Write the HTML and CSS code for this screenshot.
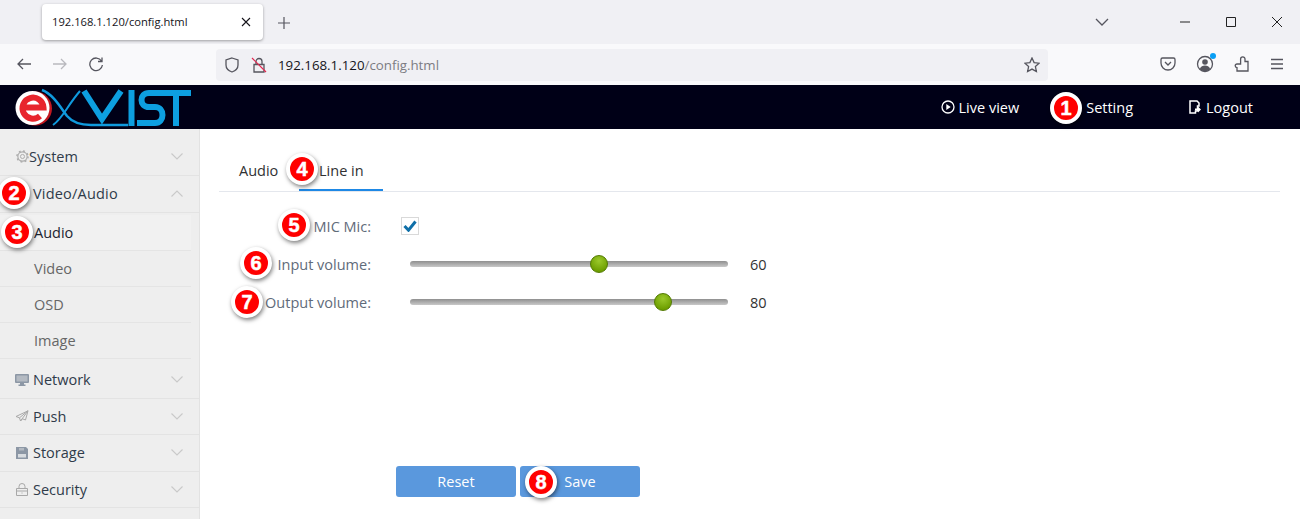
FILE: index.html
```html
<!DOCTYPE html>
<html lang="en">
<head>
<meta charset="utf-8">
<title>192.168.1.120/config.html</title>
<link rel="stylesheet" href="styles.css">
</head>
<body>
<div class="tabstrip">
  <div class="tab">
    <span class="tab-title">192.168.1.120/config.html</span>
    <svg class="ico tab-close" width="10" height="10" viewBox="0 0 10 10"><path d="M1 1l8 8M9 1L1 9"/></svg>
  </div>
  <svg class="ico newtab" width="12" height="12" viewBox="0 0 12 12"><path d="M6 0v12M0 6h12"/></svg>
  <div class="strip-spacer"></div>
  <svg class="ico tablist" width="14" height="8" viewBox="0 0 14 8"><path d="M1 1l6 6 6-6"/></svg>
  <div class="winctl">
    <svg class="ico" width="10" height="10" viewBox="0 0 10 10"><path d="M0 5h10"/></svg>
    <svg class="ico" width="10" height="10" viewBox="0 0 10 10"><path d="M.5.5h9v9h-9z"/></svg>
    <svg class="ico" width="10" height="10" viewBox="0 0 10 10"><path d="M0 0l10 10M10 0L0 10"/></svg>
  </div>
</div>
<div class="toolbar">
  <div class="nav-btns">
    <svg class="ico nav" width="16" height="16" viewBox="0 0 16 16"><path d="M15 8H2M7 3L2 8l5 5"/></svg>
    <svg class="ico nav off" width="16" height="16" viewBox="0 0 16 16"><path d="M1 8h13M9 3l5 5-5 5"/></svg>
    <svg class="ico nav" width="16" height="16" viewBox="0 0 16 16"><path d="M13.500 5A6.300 6.300 0 1 0 14.400 9M14 1.500V5.500H10"/></svg>
  </div>
  <div class="urlbar">
    <svg class="ico" width="16" height="16" viewBox="0 0 16 16"><path d="M8 1l6 2v5c0 3.500-3 6-6 7-3-1-6-3.500-6-7V3z"/></svg>
    <svg class="lock" width="16" height="16" viewBox="0 0 16 16"><path class="lock-body" d="M5 7V4.500a3 3 0 0 1 6 0V7M3 7.500h10V15H3z"/><path class="lock-slash" d="M1 1l14 14"/></svg>
    <span class="url"><span class="url-host">192.168.1.120</span>/config.html</span>
    <svg class="ico star" width="16" height="16" viewBox="0 0 16 16"><path d="M8 1l2.100 4.600 5 .6-3.700 3.400 1 5L8 12.100 3.600 14.600l1-5L.9 6.200l5-.6z"/></svg>
  </div>
  <div class="tools">
    <svg class="ico" width="16" height="16" viewBox="0 0 16 16"><path d="M2.500 2h11A1.500 1.500 0 0 1 15 3.500V7a7 7 0 0 1-14 0V3.500A1.500 1.500 0 0 1 2.500 2zM5 6l3 3 3-3"/></svg>
    <span class="profile">
      <svg class="ico" width="18" height="18" viewBox="0 0 18 18"><circle cx="9" cy="9" r="7.500"/><circle class="solid" cx="9" cy="7" r="2.800"/><path class="solid" d="M3.800 14c1-2.600 3-3.400 5.200-3.400s4.200.8 5.200 3.400a7 7 0 0 1-10.400 0z"/></svg>
      <span class="profile-dot"></span>
    </span>
    <svg class="ico" width="16" height="16" viewBox="0 0 16 16"><path d="M3 15H14V5.500H11V3A2.200 2.200 0 0 0 6.600 3V8H3A1.800 1.800 0 0 0 3 11.600V15z"/></svg>
    <svg class="ico" width="14" height="12" viewBox="0 0 14 12"><path d="M1 1.500h12M1 6h12M1 10.500h12"/></svg>
  </div>
</div>
<header class="apphead">
  <svg class="logo" width="176" height="40" viewBox="0 0 176 40">
    <path class="logo-swoosh" d="M27 2C38 6 46 20 52 28C58 35 66 37 76 37H113"/>
    <path class="logo-swoosh thin" d="M38 37C48 30 52 18 65 3"/>
    <path class="logo-letters" d="M69 3L87 31L106 3"/>
    <path class="logo-letters" d="M116.500 2V38M176 5H134C124 5 124 19 134 19H140C150 19 150 35 140 35H122M161 5V38"/>
    <circle cx="20" cy="20.500" r="17" fill="#c31820"/>
    <circle cx="17.500" cy="20" r="17" fill="#fff"/>
    <path class="logo-e" d="M7 19.500H28.500A10.500 10.500 0 1 0 25 28"/>
  </svg>
  <nav class="topnav">
    <a class="topnav-item live">
      <svg width="14" height="14" viewBox="0 0 14 14"><circle cx="7" cy="7" r="6" fill="none" stroke="#fff" stroke-width="1.300"/><path d="M5.300 4l4.400 3-4.400 3z" fill="#fff"/></svg>
      Live view
    </a>
    <a class="topnav-item setting">Setting</a>
    <a class="topnav-item logout">
      <svg width="12" height="14" viewBox="0 0 12 14"><path d="M1 1h7l2 2v3H8.500v5H6.500v2H1z" fill="none" stroke="#fff" stroke-width="1.500"/><path d="M6 8.500h3V6.500l3 3-3 3v-2H6z" fill="#fff"/></svg>
      Logout
    </a>
  </nav>
</header>
<div class="app">
  <aside class="sidebar">
    <div class="menu-head first">
      <svg class="mi gear" width="13" height="13" viewBox="0 0 14 14"><circle cx="7" cy="7" r="2.200" fill="none" stroke="#aaa"/><circle cx="7" cy="7" r="5" fill="none" stroke="#aaa" stroke-width="1.200"/><circle cx="7" cy="7" r="6" fill="none" stroke="#aaa" stroke-width="1.500" stroke-dasharray="2 2.700"/></svg>
      <span class="menu-label">System</span>
      <svg class="chev" width="12" height="7" viewBox="0 0 12 7"><path d="M.5.5L6 6 11.500.5"/></svg>
    </div>
    <div class="menu-head open">
      <span class="menu-label indent">Video/Audio</span>
      <svg class="chev" width="12" height="7" viewBox="0 0 12 7"><path d="M.5 6.500L6 1l5.500 5.500"/></svg>
    </div>
    <div class="sub-list">
      <div class="sub active">Audio</div>
      <div class="sub">Video</div>
      <div class="sub">OSD</div>
      <div class="sub">Image</div>
    </div>
    <div class="menu-head net">
      <svg class="mi" width="14" height="12" viewBox="0 0 14 12"><path d="M1 0h12a1 1 0 0 1 1 1v7a1 1 0 0 1-1 1H9v1.500h1.500V12h-7v-1.500H5V9H1a1 1 0 0 1-1-1V1a1 1 0 0 1 1-1z" fill="#8c97a5"/><path d="M1.500 1.500h11v6h-11z" fill="#b4bac2"/></svg>
      <span class="menu-label">Network</span>
      <svg class="chev" width="12" height="7" viewBox="0 0 12 7"><path d="M.5.5L6 6 11.500.5"/></svg>
    </div>
    <div class="menu-head">
      <svg class="mi" width="14" height="12" viewBox="0 0 14 12"><path d="M13 .8L1 6.500l3.500 1.300L5.500 11l2-2.200 3 1.200zM4.500 7.800L13 .8 5.500 11" fill="none" stroke="#a8a8a8"/></svg>
      <span class="menu-label">Push</span>
      <svg class="chev" width="12" height="7" viewBox="0 0 12 7"><path d="M.5.5L6 6 11.500.5"/></svg>
    </div>
    <div class="menu-head">
      <svg class="mi" width="14" height="14" viewBox="0 0 14 14"><path d="M1 1H11l2 2V13H1z" fill="#8c97a5"/><path d="M3 8h8v3.500H3z" fill="#d8dce0"/><path d="M4 2h5v2.500H4z" fill="#b4bac2"/></svg>
      <span class="menu-label">Storage</span>
      <svg class="chev" width="12" height="7" viewBox="0 0 12 7"><path d="M.5.5L6 6 11.500.5"/></svg>
    </div>
    <div class="menu-head">
      <svg class="mi" width="14" height="13" viewBox="0 0 14 13"><path d="M1.500 5.500h11v7h-11zM4 5.500V3.500a3 3 0 0 1 6 0v2M1.500 8h11M7 9.500v1" fill="none" stroke="#a8a8a8"/></svg>
      <span class="menu-label">Security</span>
      <svg class="chev" width="12" height="7" viewBox="0 0 12 7"><path d="M.5.5L6 6 11.500.5"/></svg>
    </div>
  </aside>
  <main class="content">
    <div class="tabs">
      <div class="ctab">Audio</div>
      <div class="ctab current">Line in</div>
    </div>
    <form class="form">
      <div class="row check-row">
        <label class="lbl">MIC Mic:</label>
        <span class="checkbox"><svg width="14" height="12" viewBox="0 0 14 12"><path d="M1.500 6l4 4.200L12.500 1.500" fill="none" stroke="#0f6fa8" stroke-width="3"/></svg></span>
      </div>
      <div class="row slider-row">
        <label class="lbl">Input volume:</label>
        <div class="track"><span class="thumb" style="left:59.4%"></span></div>
        <span class="val">60</span>
      </div>
      <div class="row slider-row">
        <label class="lbl">Output volume:</label>
        <div class="track"><span class="thumb" style="left:79.5%"></span></div>
        <span class="val">80</span>
      </div>
    </form>
    <div class="actions">
      <button class="btn" type="button">Reset</button>
      <button class="btn" type="button">Save</button>
    </div>
  </main>
</div>
<span class="badge b1">1</span>
<span class="badge b2">2</span>
<span class="badge b3">3</span>
<span class="badge b4">4</span>
<span class="badge b5">5</span>
<span class="badge b6">6</span>
<span class="badge b7">7</span>
<span class="badge b8">8</span>
</body>
</html>
```
FILE: styles.css
```css
* { box-sizing: border-box; }
html, body { margin: 0; height: 519px; overflow: hidden; }
body {
  position: relative;
  background: #fff;
  font-family: "Open Sans", "Noto Sans", sans-serif;
  color: #333;
  display: flex;
  flex-direction: column;
}
.ico { fill: none; stroke: #55555e; stroke-width: 1.300; flex: none; }
.ico .solid { fill: #55555e; stroke: none; }

.tabstrip {
  height: 44px;
  flex: none;
  background: #f0f0f4;
  display: flex;
  align-items: center;
  padding-left: 42px;
}
.tab {
  width: 221px;
  height: 36px;
  margin-top: -1px;
  background: #fff;
  border-radius: 4px;
  box-shadow: 0 1px 3px rgba(0,0,0,.35);
  display: flex;
  align-items: center;
  justify-content: space-between;
  padding: 0 12px 0 10px;
  font-size: 11.200px;
  color: #15141a;
}
.tab-close { stroke: #15141a; stroke-width: 1.100; }
.newtab { margin: 2px 0 0 15px; stroke: #55555e; stroke-width: 1.200; }
.strip-spacer { flex: 1; }
.tablist { margin-right: 71px; }
.winctl { display: flex; gap: 36px; padding-right: 18px; }
.winctl .ico { stroke: #222; stroke-width: 1; }

.toolbar {
  height: 41px;
  flex: none;
  background: #f9f9fb;
  display: flex;
  align-items: center;
}
.nav-btns { display: flex; gap: 20px; width: 216px; padding-left: 16px; margin-top: -2px; }
.nav.off { stroke: #b9b9be; }
.urlbar {
  width: 832px;
  height: 32px;
  background: #f0f0f4;
  border-radius: 4px;
  display: flex;
  align-items: center;
  padding: 0 8px;
  gap: 13px;
}
.lock-body { fill: none; stroke: #55555e; stroke-width: 1.300; }
.lock-slash { stroke: #e22850; stroke-width: 1.200; }
.lock { flex: none; margin-left: -2px; margin-right: -2px; }
.url { flex: 1; font-size: 13.300px; color: #7c7c82; }
.url-host { color: #15141a; }
.tools { display: flex; align-items: center; gap: 20px; margin-left: 112px; margin-top: -1px; }
.profile { position: relative; display: flex; }
.profile-dot {
  position: absolute;
  top: -2px; right: -2px;
  width: 6px; height: 6px;
  border-radius: 50%;
  background: #0a9ff5;
}

.apphead {
  height: 44px;
  flex: none;
  background: #000017;
  display: flex;
  align-items: center;
  padding-left: 15px;
  color: #fff;
}
.logo { flex: none; margin-top: 1px; }
.logo-swoosh { fill: none; stroke: #0f9ade; stroke-width: 2.500; }
.logo-swoosh.thin { stroke-width: 2; }
.logo-letters { fill: none; stroke: #0d9fe0; stroke-width: 6; }
.logo-e { fill: none; stroke: #e8252d; stroke-width: 6; }
.topnav { margin-left: auto; display: flex; align-items: center; font-size: 14.500px; }
.topnav-item { display: flex; align-items: center; gap: 4px; white-space: nowrap; }
.live { margin-right: 67px; }
.setting { margin-right: 56px; }
.logout { margin-right: 47px; gap: 5px; }

.app { flex: 1; display: flex; min-height: 0; }
.sidebar {
  width: 200px;
  flex: none;
  background: #eee;
  border-right: 1px solid #e2e2e2;
  padding-top: 10px;
  font-size: 14.500px;
}
.menu-head {
  height: 36.500px;
  display: flex;
  align-items: center;
  padding: 0 16px 0 15px;
  border-bottom: 1px solid #e3e3e3;
  color: #2f3b4a;
}
.menu-head.first { height: 37px; padding-left: 16px; padding-bottom: 2px; }
.menu-head.open { letter-spacing: .2px; }
.mi { flex: none; margin-right: 4px; }
.gear { margin-right: 0; }
.menu-label.indent { margin-left: 18px; }
.menu-label { flex: 1; }
.chev { flex: none; fill: none; stroke: #c9c9c9; stroke-width: 1.100; }
.sub-list { padding-top: 2px; }
.sub {
  height: 36px;
  width: 191px;
  display: flex;
  align-items: center;
  padding-left: 34px;
  border-bottom: 1px solid #e4e4e4;
  color: #666;
}
.sub.active { color: #1c2430; background: #f1f1f1; }
.menu-head.net { height: 40px; padding-top: 3px; }

.content { flex: 1; padding: 23px 20px 0 19px; display: flex; flex-direction: column; min-width: 0; }
.tabs {
  display: flex;
  height: 40px;
  border-bottom: 1px solid #e4e7ed;
  font-size: 14.500px;
}
.ctab { padding: 0 21px 2px 20px; height: 39px; display: flex; align-items: center; color: #303133; }
.ctab.current { border-bottom: 2px solid #1e88e5; width: 84px; justify-content: center; padding: 0; }
.form { padding-top: 15px; }
.row { display: flex; align-items: center; height: 38px; font-size: 14.500px; color: #5f6b7a; }
.lbl { width: 152px; text-align: right; flex: none; white-space: nowrap; }
.checkbox {
  width: 18px; height: 18px;
  margin-left: 30px;
  border: 1px solid #d9d9d9;
  background: #fff;
  display: flex;
  align-items: center;
  justify-content: center;
}
.track {
  position: relative;
  width: 318px;
  height: 6px;
  margin-left: 39px;
  border-radius: 3px;
  background: linear-gradient(#8f8f8f, #c8c8c8);
}
.thumb {
  position: absolute;
  top: 50%;
  width: 18px; height: 18px;
  margin: -9px 0 0 -9px;
  border-radius: 50%;
  border: 1px solid #527a00;
  background: radial-gradient(circle at 50% 30%, #9bc92b, #6d9e00 75%);
}
.val { margin-left: 22px; color: #333; }
.actions { margin-top: 145px; margin-left: 177px; display: flex; gap: 4px; }
.btn {
  width: 120px;
  height: 31px;
  border: 0;
  border-radius: 3px;
  background: #5a98dd;
  color: #fff;
  font: inherit;
  font-size: 14.500px;
  padding: 0;
}

.badge {
  position: absolute;
  width: 32px; height: 32px;
  border-radius: 50%;
  border: 4px solid #fff;
  background: #f00;
  color: #fff;
  font-family: "Liberation Sans", sans-serif;
  font-weight: 700;
  font-size: 20px;
  line-height: 24px;
  text-align: center;
  -webkit-text-stroke: .5px #fff;
  box-shadow: 1px 2px 4px rgba(0,0,0,.5);
}
.b1 { left: 1050px; top: 92px; }
.b2 { left: -2px; top: 177px; }
.b3 { left: 1px; top: 216px; }
.b4 { left: 286px; top: 153px; }
.b5 { left: 278px; top: 209px; }
.b6 { left: 240px; top: 247px; }
.b7 { left: 231px; top: 286px; }
.b8 { left: 525px; top: 466px; }
```
